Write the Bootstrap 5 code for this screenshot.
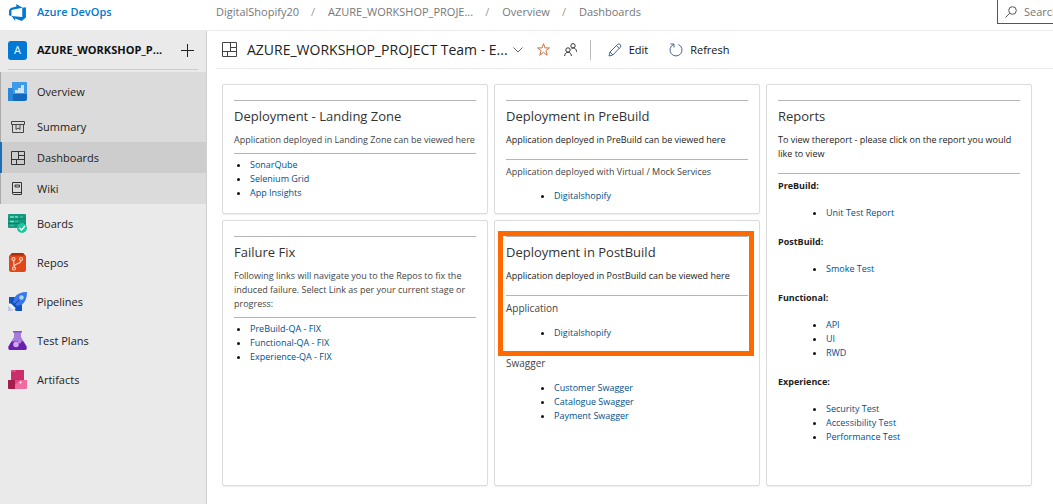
<!DOCTYPE html>
<html lang="en">
<head>
<meta charset="utf-8">
<meta name="viewport" content="width=device-width, initial-scale=1">
<title>Dashboards - Azure DevOps</title>
<link href="https://cdn.jsdelivr.net/npm/bootstrap@5.3.0/dist/css/bootstrap.min.css" rel="stylesheet">
<style>
  :root { --side: 207px; --line: #eaeaea; --link: #00508a; }
  body { font-family: "Open Sans", "Segoe UI", sans-serif; font-size: 11px; line-height: 14px; color: #222; background: #fff; }
  a { color: inherit; text-decoration: none; }
  svg { flex: none; display: block; }

  .topbar { border-bottom: 1px solid var(--line); padding-bottom: 6px; overflow: hidden; }
  .topbar > * { height: 24px; }
  .brand { width: var(--side); padding-left: 8px; gap: 10px; color: #0078d4; font-weight: 600; flex: none; }
  .breadcrumb { --bs-breadcrumb-divider: "/"; font-size: 11px; margin: 0 0 0 9px; color: #777; flex-wrap: nowrap; white-space: nowrap; }
  .breadcrumb-item + .breadcrumb-item { padding-left: 12px; }
  .breadcrumb-item + .breadcrumb-item::before { padding-right: 13px; color: #999; }
  .finder { width: 56px; border: 1px solid #555; border-width: 0 0 1px 1px; padding-left: 7px; gap: 7px; flex: none; overflow: hidden; }
  .finder input { border: 0; padding: 0; width: 60px; flex: none; outline: 0; color: #555; background: none; }
  .finder input::placeholder { color: #777; opacity: 1; }

  .sidebar { width: var(--side); background: #eaeaea; border-right: 1px solid #d0d0d0; flex: none; }
  .project { height: 39px; margin: 0 8px; border-bottom: 1px solid #ccc; gap: 10px; font-weight: 700; color: #111; }
  .avatar { width: 19px; height: 19px; border-radius: 3px; background: #0078d4; color: #fff; font-weight: 400; }
  .plus { border: 0; background: none; padding: 0; margin-right: 4px; }
  .hub, .sub { display: flex; align-items: center; }
  .hub { height: 39px; padding-left: 8px; gap: 10px; }
  .sub { height: 31px; padding-left: 11px; gap: 12px; }
  .hub-open { background: #dbdbdb; box-shadow: inset 1px 0 #aaa; margin-top: 2px; }
  .sub.active { background: #cdcdcd; box-shadow: inset 2px 0 #1a6fb5; }

  .toolbar { height: 38px; margin-left: 9px; padding-left: 6px; border-bottom: 1px solid var(--line); white-space: nowrap; }
  .toolbar h1 { font-size: 14px; line-height: 20px; font-weight: 400; margin: 0 5px 0 10px; }
  .toolbar button { border: 0; background: none; padding: 0; color: #111; display: flex; align-items: center; gap: 7px; }
  .toolbar .tool-icon { margin-left: 14px; }
  .toolbar .tool-next { margin-left: 21px; }
  .rule { width: 1px; height: 20px; background: #bbb; margin: 0 17px 0 13px; }

  .board { display: grid; grid-template-columns: repeat(3, 1fr); grid-template-rows: minmax(130px, auto) minmax(266px, auto); gap: 6px; padding: 15px 21px 18px 15px; }
  .tile { border: 1px solid #dcdcdc; border-radius: 2px; padding: 15px 11px 10px; box-shadow: 0 1px 1px #f0f0f0; font-size: 9px; min-width: 0; }
  .tile.tall { grid-row: span 2; }
  .tile hr { margin: 12px 0 5px; border-top: 1px solid #b4b4b4; opacity: 1; }
  .tile hr:first-child { margin: 0 0 5px; }
  .tile hr.snug { margin: 6px 0 4px; }
  .tile h2 { font-size: 13px; line-height: 20px; font-weight: 400; margin: 0 0 7px; color: #333; }
  .tile p { margin: 0; }
  .tile p.soft { color: #444; }
  .tile h3 { font-size: 10px; line-height: 14px; font-weight: 400; margin: 0; color: #444; }
  .tile h4 { font-size: 9px; line-height: 14px; font-weight: 700; margin: 0; }
  .tile ul { padding-left: 16px; margin: 0; }
  .tile ul.deep { padding-left: 48px; margin-top: 10px; }
  .tile h3 + ul.deep { margin-top: 11px; }
  .tile.tall ul.deep { margin: 13px 0 15px; }
  .tile li { color: #111; }
  .tile li a { color: var(--link); }
  .callout { position: relative; margin-bottom: 16px; }
  .callout::after { content: ""; position: absolute; inset: -5px -6px -16px -8px; border: 5px solid #ff6a00; pointer-events: none; }
</style>
<script src="https://cdn.jsdelivr.net/npm/bootstrap@5.3.0/dist/js/bootstrap.bundle.min.js" defer></script>
</head>
<body class="d-flex flex-column min-vh-100">

<header class="topbar d-flex">
  <a class="brand d-flex align-items-center" href="#">
    <svg width="19" height="19" viewBox="0 0 18 18" fill="#0078d4"><path d="M17 4v9.7l-4 3.3-6.200-2.250V17L3.300 12.400l10.200.800V4.500zM13.600 4.550 7.900 1v2.250L2.650 4.800 1 6.900v4.600l2.250 1V6.600z"/></svg>
    <span>Azure DevOps</span>
  </a>
  <nav class="flex-grow-1 d-flex align-items-center" aria-label="breadcrumb">
    <ol class="breadcrumb">
      <li class="breadcrumb-item"><a href="#">DigitalShopify20</a></li>
      <li class="breadcrumb-item"><a href="#">AZURE_WORKSHOP_PROJE...</a></li>
      <li class="breadcrumb-item"><a href="#">Overview</a></li>
      <li class="breadcrumb-item"><a href="#">Dashboards</a></li>
    </ol>
  </nav>
  <label class="finder d-flex align-items-center">
    <svg width="12" height="12" viewBox="0 0 12 12" fill="none" stroke="#555"><circle cx="7.500" cy="4.500" r="3.800"/><path d="M4.800 7.200.5 11.500"/></svg>
    <input type="search" placeholder="Search" aria-label="Search">
  </label>
</header>

<div class="d-flex flex-grow-1">
  <aside class="sidebar">
    <div class="project d-flex align-items-center">
      <span class="avatar d-flex align-items-center justify-content-center">A</span>
      <span>AZURE_WORKSHOP_P...</span>
      <button class="plus ms-auto" type="button" aria-label="Add"><svg width="13" height="13" viewBox="0 0 13 13" stroke="#222"><path d="M6.500 0v13M0 6.500h13"/></svg></button>
    </div>
    <nav>
      <div class="hub-open">
        <a class="hub" href="#">
          <svg width="19" height="19" viewBox="0 0 19 19"><path d="M4 0h14a1 1 0 0 1 1 1v13H4z" fill="#3d9be9"/><path d="M0 6h5v6h14v5a2 2 0 0 1-2 2H1a1 1 0 0 1-1-1z" fill="#1269bd"/><path d="M0 6h5v13H1a1 1 0 0 1-1-1z" fill="#2987d8"/><path d="M7 11V8h3V6h3V3h3v8z" fill="#c6e5fb"/></svg>
          <span>Overview</span>
        </a>
        <a class="sub" href="#">
          <svg width="14" height="14" viewBox="0 0 14 14" fill="none" stroke="#444"><path d="M.5 1.500h13v3H.5zM1.500 4.500v8h11v-8M5 5v4.500L7 8l2 1.500V5"/></svg>
          <span>Summary</span>
        </a>
        <a class="sub active" href="#" aria-current="page">
          <svg width="14" height="14" viewBox="0 0 14 14" fill="none" stroke="#333"><path d="M.5.5h13v13H.5zM7.500.5v8M.5 8.500h7M5.500 8.500v5M7.500 4.500h6M7.500 8.500h6"/></svg>
          <span>Dashboards</span>
        </a>
        <a class="sub" href="#">
          <svg width="14" height="14" viewBox="0 0 14 14" fill="none" stroke="#333"><path d="M1.500.5h9v12h-8a1 1 0 0 1-1-1zM1.500 10.500h9M4 3h4.500v2H4z"/></svg>
          <span>Wiki</span>
        </a>
      </div>
      <a class="hub" href="#">
        <svg width="19" height="19" viewBox="0 0 19 19"><path d="M1 0h16a1 1 0 0 1 1 1v13H1a1 1 0 0 1-1-1V1a1 1 0 0 1 1-1z" fill="#159a80"/><path d="M0 5h18M0 9.500h18" stroke="#0d806c"/><path d="M2 3h4M7 3h3M2 7.500h4" stroke="#7be3c6" stroke-width="1.500"/><path d="M12 3h3M7 7.500h3M2 11.500h4" stroke="#3db99c" stroke-width="1.500"/><circle cx="14" cy="14" r="5" fill="#20c5a0"/><path d="m11.500 14 2 2 3.500-4" fill="none" stroke="#fff" stroke-width="1.300"/></svg>
        <span>Boards</span>
      </a>
      <a class="hub" href="#">
        <svg width="19" height="19" viewBox="0 0 19 19"><path d="M4 0h11l3 3v14a2 2 0 0 1-2 2H3a2 2 0 0 1-2-2V3z" fill="#e0481b"/><path d="M4 0h11l2 2.500H2z" fill="#ad2f0b"/><g fill="none" stroke="#fbd0bd" stroke-width="1.200"><circle cx="5.500" cy="6" r="1.500"/><circle cx="13" cy="6" r="1.500"/><circle cx="6" cy="15.500" r="1.500"/><path d="M5.700 7.500 6 14M13 7.500c0 4-6.500 2-7 6.500"/></g></svg>
        <span>Repos</span>
      </a>
      <a class="hub" href="#">
        <svg width="19" height="19" viewBox="0 0 19 19"><path d="M1 5h6l7 8v6H8L1 11z" fill="#1452c4"/><path d="M6.500 5.500Q10 0 19 0q0 9-5.500 13L9 14 5 10z" fill="#3976ed"/><circle cx="13.500" cy="5.500" r="2.200" fill="#9bdcfa"/><path d="m6 13 5-5" stroke="#16419c"/><path d="M0 13.500 5.500 19H0z" fill="#c3cce4"/><path d="m2 12 5 5" stroke="#f5f7ff" stroke-width="2"/></svg>
        <span>Pipelines</span>
      </a>
      <a class="hub" href="#">
        <svg width="19" height="19" viewBox="0 0 19 19"><path d="M6 0v6L.5 15.500Q0 19 2 19h15q2 0 1.500-3.500L13 6V0z" fill="#a77bdc"/><path d="m3.500 10.500-3 5Q0 19 2 19h15q2 0 1.500-3.500l-3-5z" fill="#6821ad"/><path d="M5 0h9v1.500H5z" fill="#8057bb"/><circle cx="8" cy="13.500" r="2.800" fill="#d1a5f3"/><circle cx="11.500" cy="11" r="1.500" fill="#c18be8"/></svg>
        <span>Test Plans</span>
      </a>
      <a class="hub" href="#">
        <svg width="19" height="19" viewBox="0 0 19 19"><path d="M3 0h13v10H3z" fill="#cb2e6d"/><path d="M0 10h7v9H1a1 1 0 0 1-1-1z" fill="#a51d4d"/><path d="M7 10h12v8a1 1 0 0 1-1 1H7z" fill="#ef6ba0"/><path d="M7 10h5l-5 5zM3 0h5v2H3z" fill="#df4b85"/><circle cx="12.500" cy="12.500" r="1" fill="#fff"/></svg>
        <span>Artifacts</span>
      </a>
    </nav>
  </aside>

  <main class="flex-grow-1">
    <div class="toolbar d-flex align-items-center">
      <svg width="15" height="15" viewBox="0 0 15 15" fill="none" stroke="#444"><path d="M.5.5h14v14H.5zM8.500.5v9M.5 9.500h14M5.500 9.500v5M8.500 5.500h6"/></svg>
      <h1>AZURE_WORKSHOP_PROJECT Team - E...</h1>
      <button type="button" aria-label="Switch dashboard"><svg width="10" height="6" viewBox="0 0 10 6" fill="none" stroke="#666"><path d="m.5.500 4.500 4.500L9.500.500"/></svg></button>
      <button class="tool-icon" type="button" aria-label="Favorite"><svg width="13" height="13" viewBox="0 0 14 14" fill="none" stroke="#c4673a"><path d="m7 .8 1.600 4.500h4.800L9.600 8.200l1.400 4.900-4-2.900-4 2.900 1.400-4.900L.6 5.300h4.800z"/></svg></button>
      <button class="tool-icon" type="button" aria-label="Team"><svg width="13" height="13" viewBox="0 0 13 13" fill="none" stroke="#333"><circle cx="4" cy="7" r="2.200"/><circle cx="9" cy="2.800" r="2.200"/><path d="M.6 13c0-5 6.800-5 6.800 0M7.500 5.800c2-1.800 5-.5 5 3"/></svg></button>
      <span class="rule"></span>
      <button type="button"><svg width="14" height="14" viewBox="0 0 14 14" fill="none" stroke="#456596"><path d="m1 13 1-4 7.500-7.500q1.300-1.200 2.700 0 1.400 1.500 0 2.900L4.800 12zM8.500 2.700l2.800 2.800M2 9l3 3"/></svg>Edit</button>
      <button class="tool-next" type="button"><svg width="14" height="14" viewBox="0 0 14 14" fill="none" stroke="#456596"><path d="M4.500 1.500a6 6 0 1 0 5 0M1.500 1h3.500v3.500"/></svg>Refresh</button>
    </div>

    <div class="board">
      <section class="tile">
        <hr>
        <h2>Deployment - Landing Zone</h2>
        <p class="soft">Application deployed in Landing Zone can be viewed here</p>
        <hr class="snug">
        <ul>
          <li><a href="#">SonarQube</a></li>
          <li><a href="#">Selenium Grid</a></li>
          <li><a href="#">App Insights</a></li>
        </ul>
      </section>

      <section class="tile">
        <hr>
        <h2>Deployment in PreBuild</h2>
        <p>Application deployed in PreBuild can be viewed here</p>
        <hr>
        <p class="soft">Application deployed with Virtual / Mock Services</p>
        <ul class="deep"><li><a href="#">Digitalshopify</a></li></ul>
      </section>

      <section class="tile tall">
        <hr>
        <h2>Reports</h2>
        <p>To view thereport - please click on the report you would like to view</p>
        <hr>
        <h4>PreBuild:</h4>
        <ul class="deep"><li><a href="#">Unit Test Report</a></li></ul>
        <h4>PostBuild:</h4>
        <ul class="deep"><li><a href="#">Smoke Test</a></li></ul>
        <h4>Functional:</h4>
        <ul class="deep">
          <li><a href="#">API</a></li>
          <li><a href="#">UI</a></li>
          <li><a href="#">RWD</a></li>
        </ul>
        <h4>Experience:</h4>
        <ul class="deep">
          <li><a href="#">Security Test</a></li>
          <li><a href="#">Accessibility Test</a></li>
          <li><a href="#">Performance Test</a></li>
        </ul>
      </section>

      <section class="tile">
        <hr>
        <h2>Failure Fix</h2>
        <p class="soft">Following links will navigate you to the Repos to fix the induced failure. Select Link as per your current stage or progress:</p>
        <hr class="snug">
        <ul>
          <li><a href="#">PreBuild-QA - FIX</a></li>
          <li><a href="#">Functional-QA - FIX</a></li>
          <li><a href="#">Experience-QA - FIX</a></li>
        </ul>
      </section>

      <section class="tile">
        <div class="callout">
          <hr>
          <h2>Deployment in PostBuild</h2>
          <p>Application deployed in PostBuild can be viewed here</p>
          <hr>
          <h3>Application</h3>
          <ul class="deep"><li><a href="#">Digitalshopify</a></li></ul>
        </div>
        <h3>Swagger</h3>
        <ul class="deep">
          <li><a href="#">Customer Swagger</a></li>
          <li><a href="#">Catalogue Swagger</a></li>
          <li><a href="#">Payment Swagger</a></li>
        </ul>
      </section>
    </div>
  </main>
</div>
</body>
</html>
